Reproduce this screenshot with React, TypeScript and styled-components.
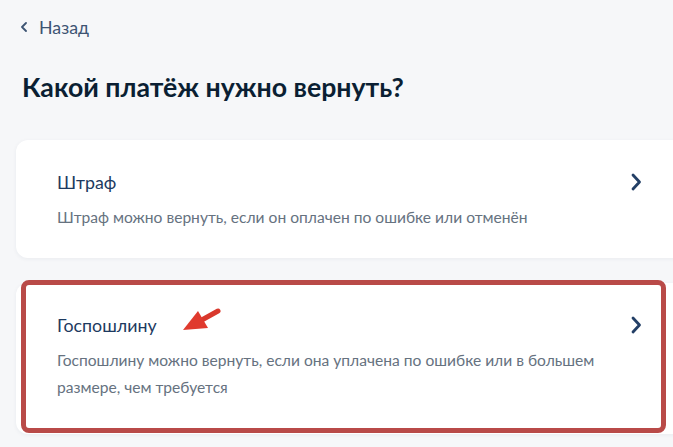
import React from 'react';
import styled, { createGlobalStyle } from 'styled-components';

const GlobalStyle = createGlobalStyle`
  html, body {
    margin: 0;
    padding: 0;
    background: #f6f7f9;
  }
  body {
    font-family: Lato, 'Noto Sans', sans-serif;
  }
`;

const options = [
  {
    title: 'Штраф',
    text: 'Штраф можно вернуть, если он оплачен по ошибке или отменён',
    marked: false,
  },
  {
    title: 'Госпошлину',
    text: 'Госпошлину можно вернуть, если она уплачена по ошибке или в большем размере, чем требуется',
    marked: true,
  },
];

const ChevronLeft = () => (
  <svg width="8" height="10" viewBox="0 0 8 10" fill="none">
    <path d="M6 1 L2 5 L6 9" stroke="#3d5473" strokeWidth="1.8" strokeLinecap="round" strokeLinejoin="round" />
  </svg>
);

const ChevronRight = () => (
  <svg width="12" height="18" viewBox="0 0 12 18" fill="none">
    <path d="M3 2 L9.5 9 L3 16" stroke="#233f66" strokeWidth="2.8" strokeLinecap="round" strokeLinejoin="round" />
  </svg>
);

const Arrow = () => (
  <svg width="40" height="26" viewBox="0 0 40 26">
    <path d="M18 15 L36 5" stroke="#d9382c" strokeWidth="5" strokeLinecap="round" />
    <polygon points="1,24 16,5 26,22" fill="#e03a2e" />
  </svg>
);

export default function App() {
  return (
    <>
      <GlobalStyle />
      <Page>
        <BackLink>
          <ChevronLeft />
          <span>Назад</span>
        </BackLink>
        <Title>Какой платёж нужно вернуть?</Title>
        <CardList>
          {options.map((option) => (
            <Card key={option.title} $marked={option.marked}>
              <CardBody>
                <CardTitleRow>
                  <CardTitle>{option.title}</CardTitle>
                  {option.marked && (
                    <ArrowMark>
                      <Arrow />
                    </ArrowMark>
                  )}
                </CardTitleRow>
                <CardText>{option.text}</CardText>
              </CardBody>
              <ChevronBox>
                <ChevronRight />
              </ChevronBox>
              {option.marked && <Highlight />}
            </Card>
          ))}
        </CardList>
      </Page>
    </>
  );
}

const Page = styled.div`
  box-sizing: border-box;
  width: 100vw;
  min-height: 100vh;
  overflow: hidden;
  padding: 15px 0 0 0;
`;

const BackLink = styled.div`
  display: flex;
  align-items: center;
  gap: 11px;
  margin-left: 20px;
  font-size: 17.8px;
  line-height: 24px;
  color: #3d5473;
`;

const Title = styled.h1`
  margin: 31px 0 0 22px;
  font-size: 26.7px;
  line-height: 34px;
  font-weight: 700;
  color: #0b1f33;
`;

const CardList = styled.div`
  display: flex;
  flex-direction: column;
  gap: 25px;
  margin: 36px 0 0 16px;
  width: 680px;
`;

const Card = styled.div<{ $marked: boolean }>`
  position: relative;
  display: flex;
  align-items: flex-start;
  background: #ffffff;
  border-radius: 12px;
  box-shadow: 0 1px 4px rgba(30, 50, 80, 0.06);
  padding: 29px 54px ${(p) => (p.$marked ? '33px' : '27px')} 41px;
`;

const CardBody = styled.div`
  flex: 1;
  display: flex;
  flex-direction: column;
  gap: 9px;
`;

const CardTitleRow = styled.div`
  position: relative;
  display: flex;
  align-items: center;
`;

const CardTitle = styled.div`
  font-size: 17.8px;
  line-height: 26px;
  color: #1d3a60;
`;

const ArrowMark = styled.div`
  position: absolute;
  left: 125px;
  top: -6px;
  line-height: 0;
`;

const CardText = styled.div`
  font-size: 15.6px;
  line-height: 27px;
  color: #66727f;
  max-width: 560px;
`;

const ChevronBox = styled.div`
  width: 12px;
  height: 26px;
  display: flex;
  align-items: center;
  margin-left: 20px;
`;

const Highlight = styled.div`
  position: absolute;
  left: 5px;
  top: -3px;
  width: 645px;
  height: 153px;
  box-sizing: border-box;
  border: 5px solid #b94a48;
  border-radius: 8px;
  pointer-events: none;
`;
